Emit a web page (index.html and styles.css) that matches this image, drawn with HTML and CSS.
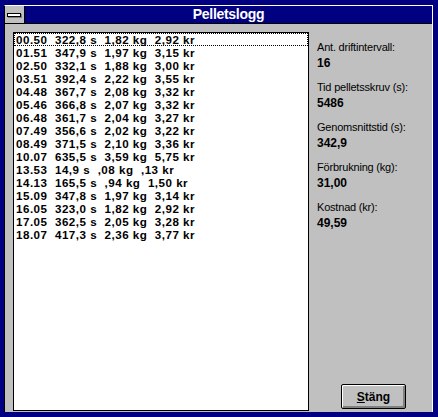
FILE: index.html
```html
<!DOCTYPE html>
<html lang="sv">
<head>
<meta charset="utf-8">
<title>Pelletslogg</title>
<link rel="stylesheet" href="styles.css">
</head>
<body>
<div class="window">
  <div class="titlebar">
    <div class="sysmenu">
      <svg width="19" height="18" viewBox="0 0 19 18">
        <rect x="3" y="8" width="14" height="4" fill="#808080"/>
        <rect x="2.5" y="7.5" width="13" height="3" fill="#fff" stroke="#000"/>
      </svg>
    </div>
    <div class="title">Pelletslogg</div>
  </div>
  <div class="client">
    <div class="list">
      <div class="row focus">00.50  322,8 s  1,82 kg  2,92 kr</div>
      <div class="row">01.51  347,9 s  1,97 kg  3,15 kr</div>
      <div class="row">02.50  332,1 s  1,88 kg  3,00 kr</div>
      <div class="row">03.51  392,4 s  2,22 kg  3,55 kr</div>
      <div class="row">04.48  367,7 s  2,08 kg  3,32 kr</div>
      <div class="row">05.46  366,8 s  2,07 kg  3,32 kr</div>
      <div class="row">06.48  361,7 s  2,04 kg  3,27 kr</div>
      <div class="row">07.49  356,6 s  2,02 kg  3,22 kr</div>
      <div class="row">08.49  371,5 s  2,10 kg  3,36 kr</div>
      <div class="row">10.07  635,5 s  3,59 kg  5,75 kr</div>
      <div class="row">13.53  14,9 s  ,08 kg  ,13 kr</div>
      <div class="row">14.13  165,5 s  ,94 kg  1,50 kr</div>
      <div class="row">15.09  347,8 s  1,97 kg  3,14 kr</div>
      <div class="row">16.05  323,0 s  1,82 kg  2,92 kr</div>
      <div class="row">17.05  362,5 s  2,05 kg  3,28 kr</div>
      <div class="row">18.07  417,3 s  2,36 kg  3,77 kr</div>
    </div>
    <div class="panel">
      <div class="stat"><div class="label">Ant. driftintervall:</div><div class="value">16</div></div>
      <div class="stat"><div class="label">Tid pelletsskruv (s):</div><div class="value">5486</div></div>
      <div class="stat"><div class="label">Genomsnittstid (s):</div><div class="value">342,9</div></div>
      <div class="stat"><div class="label">Förbrukning (kg):</div><div class="value">31,00</div></div>
      <div class="stat"><div class="label">Kostnad (kr):</div><div class="value">49,59</div></div>
      <button class="btn"><u>S</u>täng</button>
    </div>
  </div>
</div>
</body>
</html>
```
FILE: styles.css
```css
html, body {
  margin: 0;
  padding: 0;
}
body {
  background: #000080;
  width: 438px;
  height: 417px;
  overflow: hidden;
  font-family: "Liberation Sans", Arial, sans-serif;
  color: #000;
}
.window {
  margin: 5px 0 0 4px;
  width: 429px;
  height: 407px;
  box-sizing: border-box;
  border-top: 1px solid #fff;
  border-right: 1px solid #fff;
  border-left: 1px solid #000;
  background: #c0c0c0;
  display: flex;
  flex-direction: column;
}
.titlebar {
  display: flex;
  height: 18px;
  box-sizing: border-box;
  border-bottom: 1px solid #000;
}
.sysmenu {
  width: 19px;
  height: 17px;
  border-right: 1px solid #000;
  background: #c0c0c0;
}
.sysmenu svg {
  display: block;
}
.title {
  flex: 1;
  background: #000080;
  color: #fff;
  text-align: center;
  font-weight: bold;
  font-size: 14px;
  line-height: 17px;
  letter-spacing: -0.3px;
}
.client {
  flex: 1;
  display: flex;
  padding: 8px 0 0 8px;
}
.list {
  width: 296px;
  height: 379px;
  box-sizing: border-box;
  border: 1px solid #000;
  background: #fff;
}
.row {
  height: 13px;
  line-height: 13px;
  font-size: 11.6px;
  font-weight: bold;
  letter-spacing: 0.5px;
  white-space: pre;
  padding-left: 2px;
  box-sizing: border-box;
}
.row.focus {
  outline: 1px dotted #000;
  outline-offset: -1px;
}
.panel {
  flex: 1;
  display: flex;
  flex-direction: column;
  align-items: flex-start;
  padding: 8px 0 0 8px;
}
.stat {
  margin-bottom: 10px;
}
.label {
  font-size: 11px;
  line-height: 14px;
  letter-spacing: -0.2px;
  margin-bottom: 2px;
}
.value {
  font-size: 12px;
  line-height: 14px;
  font-weight: bold;
}
.btn {
  margin-top: auto;
  margin-left: 24px;
  margin-bottom: 3px;
  width: 65px;
  height: 25px;
  box-sizing: border-box;
  padding: 0;
  border: 1px solid #000;
  border-radius: 2px;
  background: #c0c0c0;
  box-shadow: inset 1px 1px 0 #fff, inset -2px -2px 0 #808080;
  font-family: "Liberation Sans", Arial, sans-serif;
  font-size: 12px;
  font-weight: bold;
  color: #000;
  line-height: 14px;
}
.btn u {
  text-decoration: underline;
}
```
